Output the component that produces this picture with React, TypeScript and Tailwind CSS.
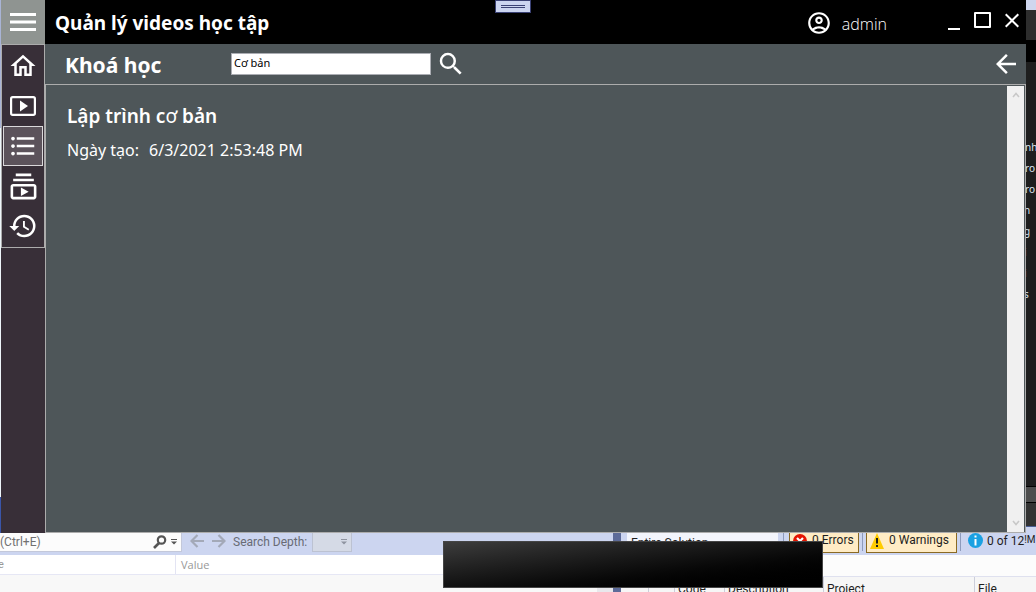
import { useState, type ReactNode } from "react";
import {
  MdArrowBack,
  MdClose,
  MdFormatListBulleted,
  MdHistory,
  MdOutlineAccountCircle,
  MdOutlineHome,
  MdOutlineSubscriptions,
  MdSearch,
} from "react-icons/md";

const PlayBoxIcon = () => (
  <svg className="h-5 w-[26px]" viewBox="0 0 26 20" fill="none">
    <rect x="1.1" y="1.1" width="23.8" height="17.8" rx="1.6" stroke="white" strokeWidth="2.2" />
    <path d="M10 4.5v11l8-5.5z" fill="white" />
  </svg>
);

const MenuIcon = () => (
  <svg className="h-5 w-[26px]" viewBox="0 0 26 20">
    <path d="M0 2.5h26M0 10h26M0 17.5h26" stroke="white" strokeWidth="2.8" />
  </svg>
);

const Arrow = ({ flip = false }: { flip?: boolean }) => (
  <svg className={flip ? "h-3.5 w-3.5 rotate-180" : "h-3.5 w-3.5"} viewBox="0 0 14 14" fill="none">
    <path d="M7.5 1 1.5 7l6 6M1.5 7H14" stroke="#a3a9b8" strokeWidth="2.2" />
  </svg>
);

const DropMark = ({ color }: { color: string }) => (
  <svg className="h-1.5 w-1.5" viewBox="0 0 6 6">
    <path d="M0 0h6v1H0zM0 2.5h6L3 5.5z" fill={color} />
  </svg>
);

const menu: { label: string; icon: ReactNode }[] = [
  { label: "Trang chủ", icon: <MdOutlineHome size={30} /> },
  { label: "Video", icon: <PlayBoxIcon /> },
  { label: "Khoá học", icon: <MdFormatListBulleted size={30} /> },
  { label: "Danh sách phát", icon: <MdOutlineSubscriptions size={31} /> },
  { label: "Lịch sử", icon: <MdHistory size={30} /> },
];

function Sidebar() {
  const [active, setActive] = useState(2);
  return (
    <aside className="flex w-11 shrink-0 flex-col bg-[#382f38]">
      <button aria-label="Menu" className="flex h-11 items-center justify-center bg-[#8f9491]">
        <MenuIcon />
      </button>
      <nav className="flex flex-col items-center border border-[#acacac] py-px">
        {menu.map((m, i) => (
          <button
            key={m.label}
            aria-label={m.label}
            onClick={() => setActive(i)}
            className={
              i === active
                ? "flex h-10 w-10 items-center justify-center border border-[#dad8da] bg-[#5c535b] text-white"
                : "flex h-10 w-10 items-center justify-center text-white"
            }
          >
            {m.icon}
          </button>
        ))}
      </nav>
    </aside>
  );
}

function TitleBar() {
  return (
    <header className="flex h-11 shrink-0 items-center bg-black pr-0.5 pl-2.5 text-white">
      <h1 className="flex-1 pt-0.5 text-[19px] leading-6 font-bold">Quản lý videos học tập</h1>
      <div className="mr-[57px] flex items-center gap-2.5 pt-0.5">
        <MdOutlineAccountCircle size={26} />
        <span className="pt-0.5 font-['Open_Sans'] text-base leading-6 font-light">admin</span>
      </div>
      <div className="flex items-center gap-2 pb-1">
        <button aria-label="Thu nhỏ" className="flex h-5 w-5 items-end justify-center">
          <span className="h-0.5 w-3 bg-white" />
        </button>
        <button aria-label="Phóng to" className="flex h-5 w-5 items-center justify-center">
          <span className="h-4 w-[17px] rounded-[1px] border-2 border-white" />
        </button>
        <button aria-label="Đóng" className="flex h-5 w-6 items-center justify-center">
          <MdClose size={25} />
        </button>
      </div>
    </header>
  );
}

function Toolbar() {
  return (
    <div className="flex h-10 shrink-0 items-center pr-[5px] pl-5 text-white">
      <h2 className="w-[166px] pt-0.5 text-[21px] leading-7 font-bold">Khoá học</h2>
      <input
        aria-label="Tìm khoá học"
        defaultValue="Cơ bản"
        className="h-[22px] w-[200px] border border-[#abadb3] bg-white px-0.5 pb-1 text-[11px] leading-4 text-black outline-none"
      />
      <button aria-label="Tìm" className="ml-[5px]">
        <MdSearch size={30} />
      </button>
      <button aria-label="Quay lại" className="ml-auto">
        <MdArrowBack size={30} />
      </button>
    </div>
  );
}

function CourseList() {
  return (
    <main className="flex min-h-0 flex-1 border border-[#acacac]">
      <article className="flex-1 px-[21px] pt-[17px] text-white">
        <h3 className="text-[19px] leading-7 font-semibold">
          Lập trình c<span className="font-normal">ơ</span> bản
        </h3>
        <p className="mt-2 flex gap-2.5 text-base leading-6">
          <span>Ngày tạo:</span>
          <span>6/3/2021 2:53:48 PM</span>
        </p>
      </article>
      <div className="mt-px mr-px flex w-[17px] flex-col items-center justify-between bg-[#f0f0f0] py-1.5">
        <svg className="h-1.5 w-2" viewBox="0 0 8 6" fill="none">
          <path d="M1 5 4 1.5 7 5" stroke="#c8c8c8" strokeWidth="1.6" />
        </svg>
        <svg className="h-1.5 w-2" viewBox="0 0 8 6" fill="none">
          <path d="M1 1 4 4.5 7 1" stroke="#c8c8c8" strokeWidth="1.6" />
        </svg>
      </div>
    </main>
  );
}

const codeLines = ["nh", "ro", "ro", "n", "g", "i", "i", "s"];

function CodeEdge() {
  return (
    <div className="flex w-2.5 shrink-0 flex-col overflow-hidden bg-[#1e1e1e] text-[10px] leading-[21px] text-[#dce6f2]">
      <div className="h-2.5 shrink-0 bg-[#cfd6ee]" />
      <div className="h-[30px] shrink-0 bg-[#2d2d2d]" />
      <div className="h-[22px] shrink-0 bg-black" />
      <div className="h-[75px] shrink-0" />
      {codeLines.map((t, i) => (
        <span key={i} className={i > 2 ? "-ml-0.5 h-[21px] w-2" : "-ml-px h-[21px]"}>
          {t}
        </span>
      ))}
      <div className="mt-auto h-4 shrink-0 border-t border-black bg-[#4d4d4d]" />
      <div className="h-6 shrink-0 border-t border-black bg-[#333333]" />
      <div className="h-[7px] shrink-0 border-t border-[#4b5f94] bg-[#ccd5f0]" />
    </div>
  );
}

function WatchPanel() {
  return (
    <section className="flex w-[613px] shrink-0 flex-col bg-[#f8f8f8]">
      <div className="flex h-[22px] shrink-0 items-start bg-[#ccd5f0]">
        <div className="flex h-[19px] w-[182px] items-center border-r border-b border-[#c3c8da] bg-[#fcfcfc] pr-1">
          <span className="flex-1 text-[#717171]">(Ctrl+E)</span>
          <svg className="mr-1 h-3.5 w-3.5" viewBox="0 0 14 14" fill="none">
            <circle cx="8.5" cy="5" r="3.7" stroke="#555" strokeWidth="2.2" />
            <path d="M6 8 1 13" stroke="#555" strokeWidth="2.6" />
          </svg>
          <DropMark color="#555" />
        </div>
        <div className="ml-2 flex h-4 items-center gap-2">
          <Arrow />
          <Arrow flip />
        </div>
        <span className="ml-[7px] w-[79px] leading-[18px] text-[#686b75]">Search Depth:</span>
        <div className="flex h-[19px] w-10 items-center justify-end border border-t-0 border-[#bcc2d2] bg-[#d5dae6] pr-1">
          <DropMark color="#8f94a0" />
        </div>
      </div>
      <div className="flex h-5 shrink-0 border-b border-[#e6e7f5] bg-white text-[11px] leading-[19px] text-[#999]">
        <span className="w-[176px] border-r border-[#e3e4f3]">
          <span className="-ml-0.5">e</span>
        </span>
        <span className="pl-[5px] font-['Open_Sans']">Value</span>
      </div>
      <div className="ml-auto w-4 flex-1 bg-[#e8e8ec]" />
    </section>
  );
}

function ErrorPanel() {
  return (
    <section className="flex min-w-0 flex-1 flex-col bg-[#fcfcfc] text-[#1e1e1e]">
      <div className="flex h-[22px] shrink-0 items-start overflow-hidden bg-[#ccd5f0] pl-1.5 leading-[17px]">
        <div className="flex h-5 w-[151px] shrink-0 items-center bg-[#f3f5fc] pl-1">
          <span className="flex-1">Entire Solution</span>
          <span className="mr-1 border-x-[3px] border-t-4 border-x-transparent border-t-[#1e1e1e]" />
        </div>
        <span className="mx-[5px] h-4 w-px shrink-0 bg-[#8e9bbc]" />
        <button className="flex h-5 w-[70px] shrink-0 items-center gap-[5px] border border-t-0 border-[#8a6a24] bg-[#ffecc5] pb-1 pl-[3px]">
          <svg className="h-3.5 w-3.5 shrink-0" viewBox="0 0 14 14">
            <circle cx="7" cy="7" r="7" fill="#e51400" />
            <path d="M4 4l6 6M10 4l-6 6" stroke="white" strokeWidth="2.2" />
          </svg>
          0 Errors
        </button>
        <span className="mx-[3px] h-[18px] w-px shrink-0 bg-[#8e9bbc]" />
        <button className="flex h-5 w-[91px] shrink-0 items-center gap-[5px] border border-t-0 border-[#8a6a24] bg-[#ffecc5] pb-1 pl-[3px]">
          <svg className="h-4 w-3.5 shrink-0" viewBox="0 0 14 16">
            <path d="M7 0l7 16H0z" fill="#ffcc00" />
            <path d="M6 5h2v5.5H6zM6 12h2v2H6z" fill="#1e1e1e" />
          </svg>
          0 Warnings
        </button>
        <span className="mr-[7px] ml-[3px] h-[18px] w-px shrink-0 bg-[#8e9bbc]" />
        <svg className="mr-1 h-[15px] w-[15px] shrink-0" viewBox="0 0 15 15">
          <circle cx="7.5" cy="7.5" r="7.5" fill="#1ba1e2" />
          <path d="M6.5 2.5h2v2h-2zM6.5 6h2v6.5h-2z" fill="white" />
        </svg>
        <span>0 of 12</span>
        <span className="text-[10px] leading-[14px]">!M</span>
      </div>
      <div className="h-[22px] shrink-0 border-b border-[#dfe1ef]" />
      <div className="flex flex-1 overflow-hidden bg-[#f6f6f6] leading-6">
        <span className="w-7 border-r border-[#cccedb]" />
        <span className="w-[26px] border-r border-[#ccceda]" />
        <span className="w-[50px] border-r border-[#ccceda] pl-[3px]">Code</span>
        <span className="w-[99px] border-r border-[#ccceda] pl-[3px]">Description</span>
        <span className="w-[151px] border-r border-[#ccceda] pl-[3px]">Project</span>
        <span className="pl-[3px]">File</span>
      </div>
    </section>
  );
}

export default function App() {
  return (
    <div className="relative flex h-screen flex-col overflow-hidden bg-[#f8f8f8] font-['Noto_Sans','Open_Sans',sans-serif]">
      <div className="flex min-h-0 flex-1">
        <div className="flex w-px shrink-0 flex-col bg-[#eef6fa]">
          <div className="h-32 bg-[#a9b4d6]" />
          <div className="mt-auto h-9 bg-[#3a55a8]" />
        </div>
        <div className="flex min-w-0 flex-1 bg-[#4e5659]">
          <Sidebar />
          <div className="flex min-w-0 flex-1 flex-col">
            <TitleBar />
            <Toolbar />
            <CourseList />
          </div>
        </div>
        <CodeEdge />
      </div>
      <div className="flex h-[59px] shrink-0 overflow-hidden font-['Roboto',sans-serif] text-xs whitespace-nowrap">
        <WatchPanel />
        <div className="w-2 shrink-0 bg-[#5d6b99]" />
        <ErrorPanel />
      </div>
      <div className="absolute top-0 left-[495px] flex h-[13px] w-9 flex-col items-center justify-center gap-px border border-[#3b4275] bg-[#ccd5f0]">
        <span className="h-px w-6 bg-[#3b4275]" />
        <span className="h-px w-6 bg-[#3b4275]" />
      </div>
      <div className="absolute bottom-1 left-[443px] h-[47px] w-[380px] border border-[#454545] bg-linear-to-br from-[#3d3d3d] to-black" />
    </div>
  );
}
